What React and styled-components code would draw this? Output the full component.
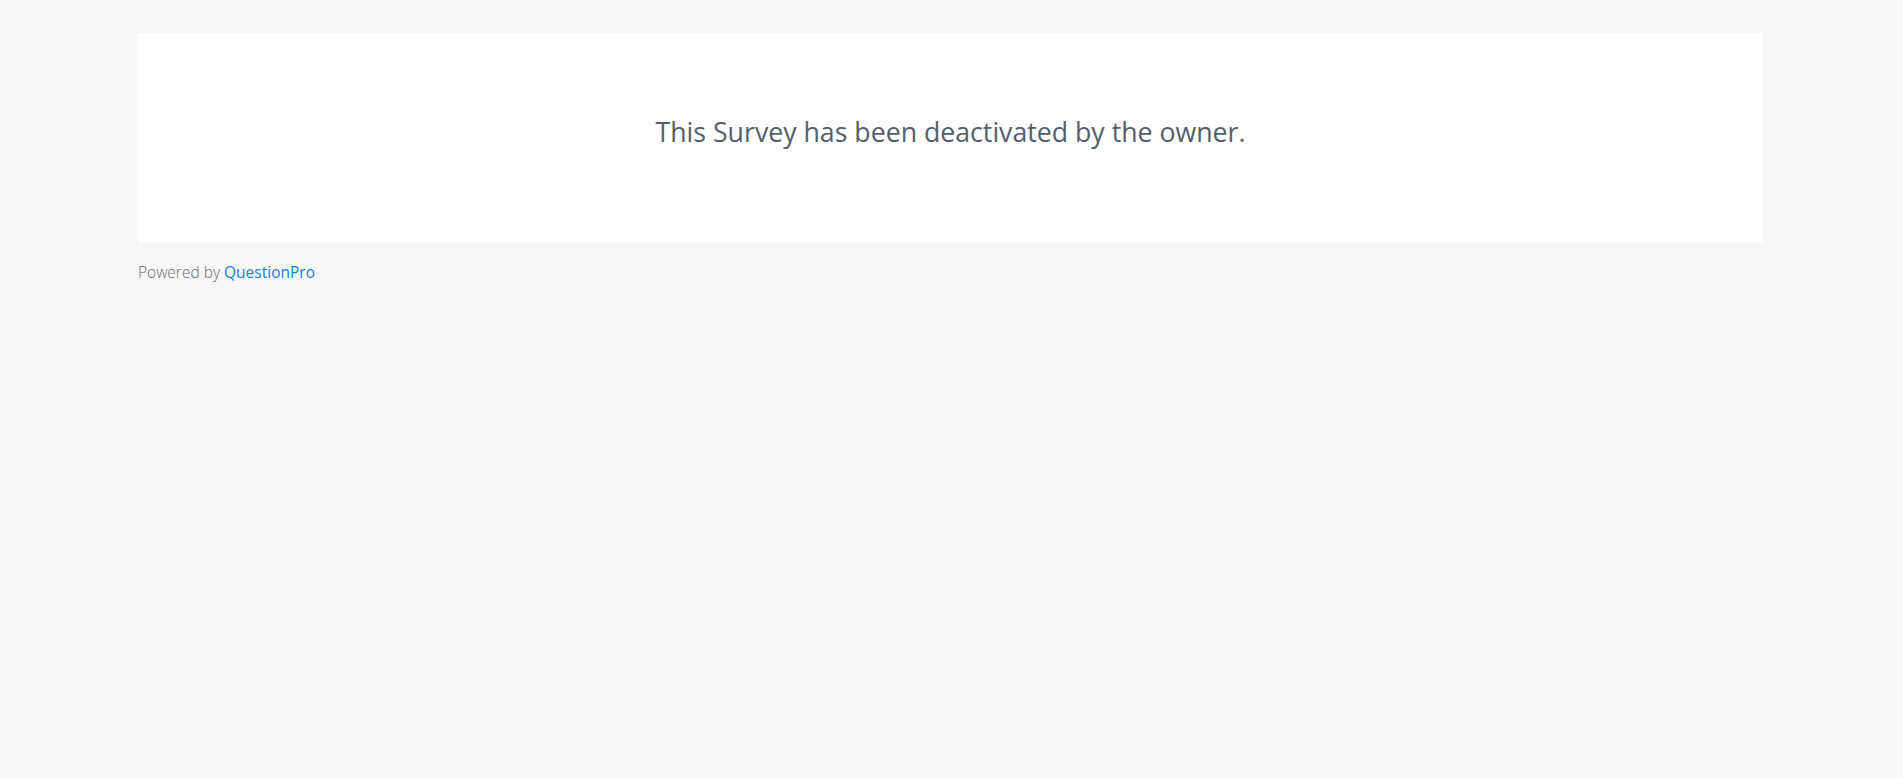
import React from 'react';
import styled, { createGlobalStyle } from 'styled-components';

const GlobalStyle = createGlobalStyle`
  html, body {
    margin: 0;
    padding: 0;
    background: #f7f7f7;
    font-family: 'Open Sans', 'Noto Sans', sans-serif;
  }
`;

const Page = styled.div`
  min-height: 778px;
  padding: 33px 0 0 138px;
  box-sizing: border-box;
`;

const Card = styled.section`
  width: 1625px;
  height: 210px;
  box-sizing: border-box;
  background: #ffffff;
  padding-top: 82px;
  text-align: center;
`;

const Message = styled.h1`
  margin: 0;
  font-size: 26.7px;
  font-weight: 400;
  line-height: 34px;
  color: #545e6b;
`;

const Footer = styled.footer`
  margin-top: 18px;
  font-size: 15.5px;
  line-height: 22px;
  font-weight: 300;
  color: #6c6c6c;
`;

const BrandLink = styled.a`
  color: #1b7fd6;
  font-weight: 400;
  text-decoration: none;
`;

const App = () => {
  return (
    <>
      <GlobalStyle />
      <Page>
        <Card>
          <Message>This Survey has been deactivated by the owner.</Message>
        </Card>
        <Footer>
          Powered by <BrandLink href="#">QuestionPro</BrandLink>
        </Footer>
      </Page>
    </>
  );
};

export default App;
